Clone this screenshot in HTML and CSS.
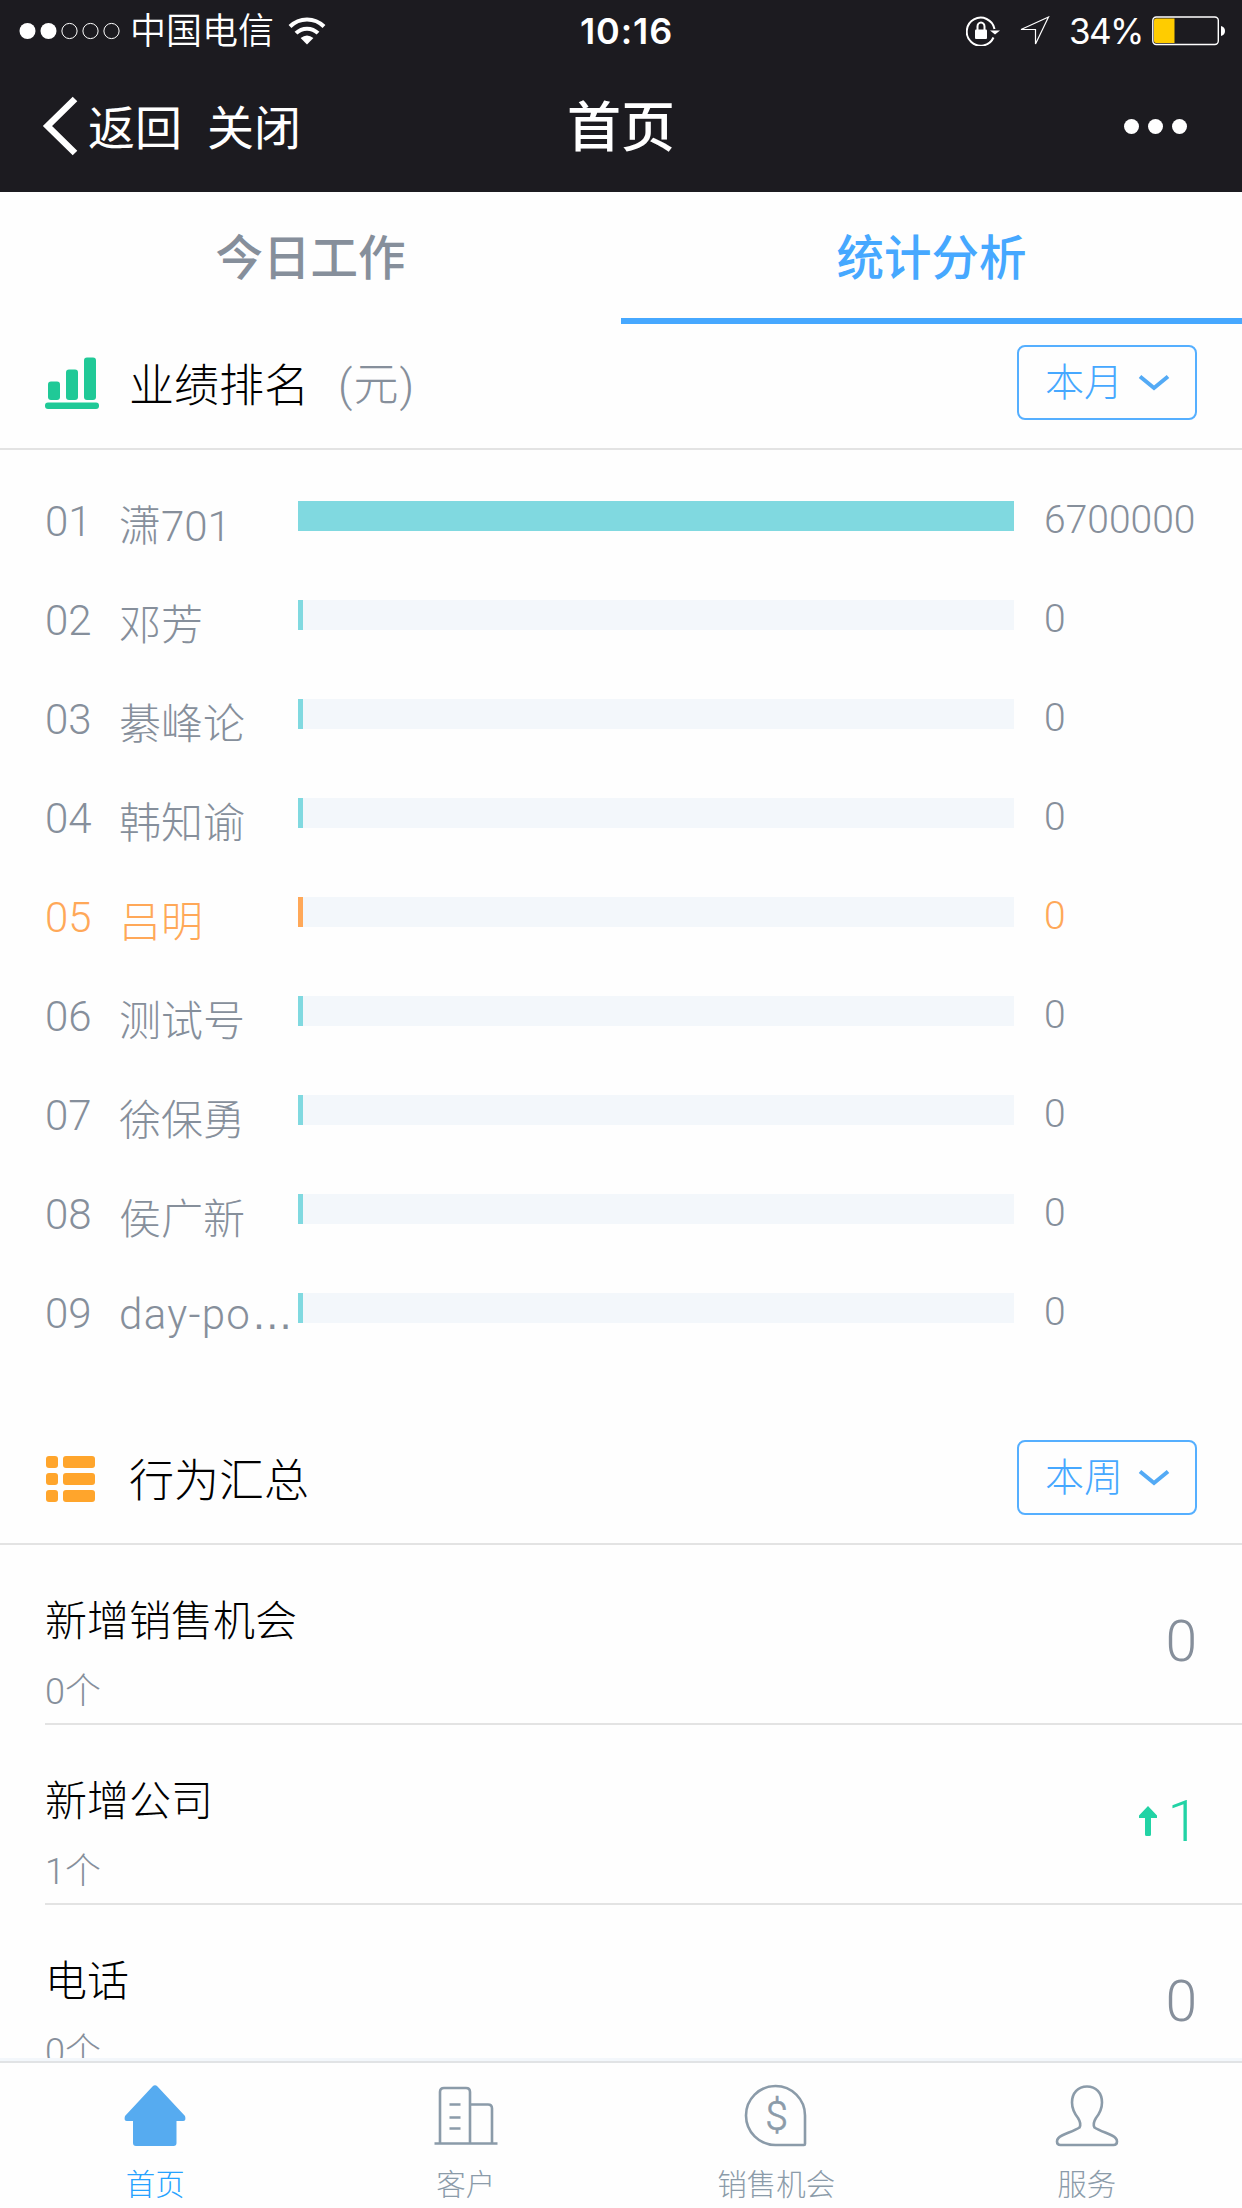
FILE: index.html
```html
<!DOCTYPE html>
<html lang="zh-CN">
<head>
  <meta charset="UTF-8">
  <meta name="viewport" content="width=device-width, initial-scale=1.0">
  <title>首页</title>
  <link rel="stylesheet" href="styles.css">
</head>
<body>
  <div class="page">

    <header class="top">
      <div class="status">
        <div class="status-left">
          <svg class="signal" width="101" height="18" viewBox="0 0 101 18">
            <g fill="#fff">
              <circle cx="8.5" cy="9" r="8"/>
              <circle cx="29.5" cy="9" r="8"/>
            </g>
            <g fill="none" stroke="#fff" stroke-width="1">
              <circle cx="50.5" cy="9" r="7.6"/>
              <circle cx="71.5" cy="9" r="7.6"/>
              <circle cx="92.5" cy="9" r="7.6"/>
            </g>
          </svg>
          <span class="carrier">中国电信</span>
          <svg class="wifi" width="38" height="28" viewBox="0 0 38 28">
            <g fill="none" stroke="#fff" stroke-width="4">
              <path d="M2 9.5A24 24 0 0 1 36 9.5"/>
              <path d="M8 16.2A15.6 15.6 0 0 1 30 16.2"/>
            </g>
            <path d="M19 27.5L12.6 21Q19 15.8 25.4 21Z" fill="#fff"/>
          </svg>
        </div>
        <span class="time">10:16</span>
        <div class="status-right">
          <svg width="35" height="30" viewBox="0 0 35 30">
            <path d="M27.5 21.5A14 14 0 1 1 28.5 13" fill="none" stroke="#fff" stroke-width="2"/>
            <path d="M24 14.5H34L29 18.5Z" fill="#fff"/>
            <path d="M11.5 14V10.5A3.5 4 0 0 1 18.5 10.5V14" fill="none" stroke="#fff" stroke-width="2"/>
            <rect x="9" y="13.5" width="12" height="9.5" rx="1" fill="#fff"/>
          </svg>
          <svg class="locate" width="31" height="30" viewBox="0 0 31 30">
            <path d="M29.5 1L2 13.5H16.5V28Z" fill="none" stroke="#fff" stroke-width="1.2"/>
          </svg>
          <span class="percent">34%</span>
          <svg width="74" height="30" viewBox="0 0 74 30">
            <rect x="0.8" y="1" width="65.5" height="27.5" rx="3.5" fill="none" stroke="#fff" stroke-width="1.4"/>
            <path d="M4 2.5H22.5V27H4Q2 27 2 25V4.5Q2 2.5 4 2.5Z" fill="#ffcc00"/>
            <path d="M69 10Q73 11 73 15T69 20Z" fill="#fff"/>
          </svg>
        </div>
      </div>
      <div class="navbar">
        <div class="nav-left">
          <svg width="36" height="60" viewBox="0 0 36 60">
            <path d="M33 3L5.5 30L33 57" fill="none" stroke="#fff" stroke-width="6.5"/>
          </svg>
          <span class="back">返回</span>
          <span>关闭</span>
        </div>
        <h1>首页</h1>
        <div class="more"><i></i><i></i><i></i></div>
      </div>
    </header>

    <div class="tabs">
      <div class="tab">今日工作</div>
      <div class="tab active">统计分析</div>
    </div>

    <main>
      <section class="rank">
        <div class="section-head">
          <svg class="head-icon" width="56" height="54" viewBox="0 0 56 54" fill="#20c997">
            <rect x="3" y="24.5" width="12" height="18.5" rx="3"/>
            <rect x="21" y="12.5" width="12" height="30.5" rx="3"/>
            <rect x="39" y="0.5" width="12" height="42.5" rx="3"/>
            <rect x="0" y="45.5" width="54" height="6.5" rx="3"/>
          </svg>
          <h2>业绩排名</h2>
          <span class="unit">(元)</span>
          <div class="select">
            <span>本月</span>
            <svg width="32" height="18" viewBox="0 0 32 18"><path d="M2 2.5L16 14L30 2.5" fill="none" stroke="#53aaf5" stroke-width="4"/></svg>
          </div>
        </div>
        <ul class="rank-list">
          <li><span class="no">01</span><span class="name">潇701</span><div class="bar"><div class="fill" style="width: 100%"></div></div><span class="num">6700000</span></li>
          <li><span class="no">02</span><span class="name">邓芳</span><div class="bar"><div class="fill"></div></div><span class="num">0</span></li>
          <li><span class="no">03</span><span class="name">綦峰论</span><div class="bar"><div class="fill"></div></div><span class="num">0</span></li>
          <li><span class="no">04</span><span class="name">韩知谕</span><div class="bar"><div class="fill"></div></div><span class="num">0</span></li>
          <li class="me"><span class="no">05</span><span class="name">吕明</span><div class="bar"><div class="fill"></div></div><span class="num">0</span></li>
          <li><span class="no">06</span><span class="name">测试号</span><div class="bar"><div class="fill"></div></div><span class="num">0</span></li>
          <li><span class="no">07</span><span class="name">徐保勇</span><div class="bar"><div class="fill"></div></div><span class="num">0</span></li>
          <li><span class="no">08</span><span class="name">侯广新</span><div class="bar"><div class="fill"></div></div><span class="num">0</span></li>
          <li><span class="no">09</span><span class="name latin">day-po<span class="dots">…</span></span><div class="bar"><div class="fill"></div></div><span class="num">0</span></li>
        </ul>
      </section>

      <section class="summary">
        <div class="section-head">
          <svg class="head-icon" width="56" height="54" viewBox="0 0 56 54" fill="#ffa52c">
            <rect x="1" y="4" width="12" height="12" rx="3"/>
            <rect x="18" y="4" width="32" height="12" rx="3"/>
            <rect x="1" y="21" width="12" height="12" rx="3"/>
            <rect x="18" y="21" width="32" height="12" rx="3"/>
            <rect x="1" y="38" width="12" height="12" rx="3"/>
            <rect x="18" y="38" width="32" height="12" rx="3"/>
          </svg>
          <h2>行为汇总</h2>
          <div class="select">
            <span>本周</span>
            <svg width="32" height="18" viewBox="0 0 32 18"><path d="M2 2.5L16 14L30 2.5" fill="none" stroke="#53aaf5" stroke-width="4"/></svg>
          </div>
        </div>
        <ul class="sum-list">
          <li>
            <div><h3>新增销售机会</h3><p>0个</p></div>
            <span class="value">0</span>
          </li>
          <li>
            <div><h3>新增公司</h3><p>1个</p></div>
            <span class="value up">
              <svg width="20" height="30" viewBox="0 0 20 30"><path d="M10 0L19 9.5V12H13V28.5Q13 30 11.5 30H8.5Q7 30 7 28.5V12H1V9.5Z" fill="#22d3a5"/></svg>
              1
            </span>
          </li>
          <li>
            <div><h3>电话</h3><p>0个</p></div>
            <span class="value">0</span>
          </li>
        </ul>
      </section>
    </main>

    <footer class="tabbar">
      <a class="on">
        <svg width="64" height="64" viewBox="0 0 64 64">
          <path d="M29.5 2.5Q32 0 34.5 2.5L62 32Q63.5 37 60 37H53.5V59Q53.5 62 50.5 62H13Q10 62 10 59V37H4Q0.5 37 2 32Z" fill="#56abf0"/>
        </svg>
        <span>首页</span>
      </a>
      <a>
        <svg width="64" height="64" viewBox="0 0 64 64" fill="none" stroke="#8b9ba9" stroke-width="2.6">
          <path d="M0.5 59.5H63.5M6 59V8Q6 4 10 4H32Q36 4 36 8V59M36 20.5H54Q58 20.5 58 24.5V59"/>
          <path d="M15.5 20.5H26.5M15.5 33.5H26.5M15.5 44.5H26.5"/>
        </svg>
        <span>客户</span>
      </a>
      <a>
        <svg width="64" height="64" viewBox="0 0 64 64">
          <path d="M61 60V31.5A29.5 29.5 0 1 0 31.5 61H60Q61 61 61 60Z" fill="none" stroke="#8b9ba9" stroke-width="2.6"/>
          <text class="dollar" x="32.5" y="46" text-anchor="middle">$</text>
        </svg>
        <span>销售机会</span>
      </a>
      <a>
        <svg width="64" height="64" viewBox="0 0 64 64" fill="none" stroke="#8b9ba9" stroke-width="2.6">
          <path d="M32 2.5C23 2.5 17 9 17 18.5C17 25 19.5 29.5 23 34C25.5 38 26 41 24.5 43.5C20 46.5 12 49 7 51.5C3.5 53.2 2 55 2 57.500C2 59.5 3 61 5.5 61H58.5C61 61 62 59.5 62 57.5C62 55 60.5 53.2 57 51.5C52 49 44 46.5 39.5 43.5C38 41 38.5 38 41 34C44.5 29.5 47 25 47 18.5C47 9 41 2.5 32 2.5Z"/>
        </svg>
        <span>服务</span>
      </a>
    </footer>

  </div>
</body>
</html>
```

FILE: styles.css
```css
* { box-sizing: border-box; margin: 0; padding: 0; }

body {
  font-family: Roboto, "Noto Sans CJK SC", sans-serif;
  font-weight: 300;
  background: #fefefe;
  color: #000;
}

ul { list-style: none; }
svg { display: block; flex: none; }
h1, h2, h3 { font-weight: 300; }

.page {
  width: 1242px;
  height: 2208px;
  display: flex;
  flex-direction: column;
  overflow: hidden;
}

/* 顶部状态栏 */
.top {
  height: 192px;
  flex: none;
  background: #1c1b20;
  color: #fff;
}

.status {
  height: 60px;
  display: grid;
  grid-template-columns: 1fr auto 1fr;
  align-items: center;
  padding: 0 16px 0 19px;
}

.status-left,
.status-right {
  display: flex;
  align-items: center;
}

.status-right { justify-content: flex-end; }

.carrier {
  font-size: 36px;
  line-height: 60px;
  padding-top: 2px;
  margin-left: 10px;
  font-weight: 350;
}

.wifi { margin-left: 14px; }

.time {
  font-family: Inter, sans-serif;
  font-size: 36px;
  font-weight: 600;
  letter-spacing: 0.9px;
  line-height: 62px;
  margin-left: 8px;
}

.locate { margin: 0 19px 0 18px; }

.percent {
  font-family: Inter, sans-serif;
  font-size: 35px;
  font-weight: 400;
  letter-spacing: -1.5px;
  line-height: 62px;
  margin-right: 9px;
}

.navbar {
  height: 132px;
  display: grid;
  grid-template-columns: 1fr auto 1fr;
  align-items: center;
  padding: 0 42px;
}

.nav-left {
  display: flex;
  align-items: center;
  font-size: 47px;
  font-weight: 400;
  line-height: 60px;
}

.nav-left span { padding-top: 5px; }

.back { margin: 0 25px 0 10px; }

.navbar h1 {
  font-size: 54px;
  font-weight: 500;
  line-height: 72px;
  padding-top: 5px;
}

.more {
  display: flex;
  gap: 9px;
  justify-content: flex-end;
  margin-right: 13px;
}

.more i {
  width: 15px;
  height: 15px;
  border-radius: 50%;
  background: #fff;
}

/* 页签 */
.tabs {
  display: flex;
  flex: none;
  height: 132px;
}

.tab {
  flex: 1;
  text-align: center;
  font-size: 47.5px;
  font-weight: 500;
  line-height: 135px;
  color: #868f9b;
}

.tab.active {
  color: #46a8ff;
  border-bottom: 6px solid #46a8ff;
}

main {
  flex: 1;
  min-height: 0;
  overflow: hidden;
}

.section-head {
  display: flex;
  align-items: center;
  height: 126px;
  padding: 0 45px;
  border-bottom: 2px solid #e3e3e3;
}

.head-icon { margin: -4px 28px 0 0; }

.section-head h2 {
  font-size: 45px;
  line-height: 60px;
  padding-top: 2px;
}

.unit {
  font-size: 45px;
  line-height: 60px;
  letter-spacing: 1px;
  margin-left: 29px;
  color: #868f9b;
}

.select {
  display: flex;
  align-items: center;
  justify-content: space-between;
  width: 180px;
  height: 75px;
  margin: -7px 0 0 auto;
  padding: 0 25px 0 26px;
  border: 2px solid #55afff;
  border-radius: 8px;
  color: #46a8ff;
  font-size: 39px;
}

.select span {
  line-height: 50px;
  padding-top: 1px;
}

/* 业绩排名 */
.rank-list { padding: 51px 45px 78px; }

.rank-list li {
  display: flex;
  height: 99px;
  color: #868f9b;
}

.rank-list li:last-child { height: 48px; }

.no,
.name {
  font-size: 42px;
  line-height: 42px;
  white-space: nowrap;
}

.no {
  width: 74px;
}

.name {
  width: 179px;
  padding-top: 5px;
}

.name.latin {
  letter-spacing: 1.3px;
  padding-top: 1px;
}

.dots {
  font-family: "Liberation Sans", sans-serif;
  letter-spacing: 0;
}

.bar {
  width: 716px;
  height: 30px;
  background: #f3f7fb;
}

.fill {
  width: 5px;
  height: 100%;
  background: #80d9e0;
}

.num {
  margin-left: 30px;
  font-size: 39px;
  line-height: 38px;
}

.rank-list .me { color: #ffa858; }
.me .fill { background: #ffa858; }

/* 行为汇总 */
.sum-list { padding-left: 45px; }

.sum-list li {
  display: flex;
  justify-content: space-between;
  height: 180px;
  padding: 46px 45px 0 0;
  border-bottom: 2px solid #e3e3e3;
}

.sum-list h3 {
  font-size: 42px;
  line-height: 60px;
  padding-top: 1px;
}

.sum-list p {
  margin-top: 14px;
  font-size: 36px;
  line-height: 52px;
  color: #868f9b;
}

.value {
  display: flex;
  align-items: center;
  gap: 9px;
  height: 100px;
  font-size: 57px;
  color: #868f9b;
}

.value.up {
  color: #22d3a5;
  margin-right: -2px;
}

/* 底部导航 */
.tabbar {
  display: flex;
  flex: none;
  height: 150px;
  border-top: 3px solid #f3f7fb;
  box-shadow: inset 0 2px 0 #e1e3e5;
}

.tabbar a {
  flex: 1;
  display: flex;
  flex-direction: column;
  align-items: center;
  padding-top: 23px;
  font-size: 29.5px;
  color: #8b9ba9;
}

.tabbar span {
  margin-top: 15px;
  line-height: 44px;
}

.tabbar .on { color: #26a2ff; }

.dollar {
  font-size: 41px;
  font-weight: 300;
  fill: #8b9ba9;
  stroke: #8b9ba9;
  stroke-width: 0.6;
}
```
